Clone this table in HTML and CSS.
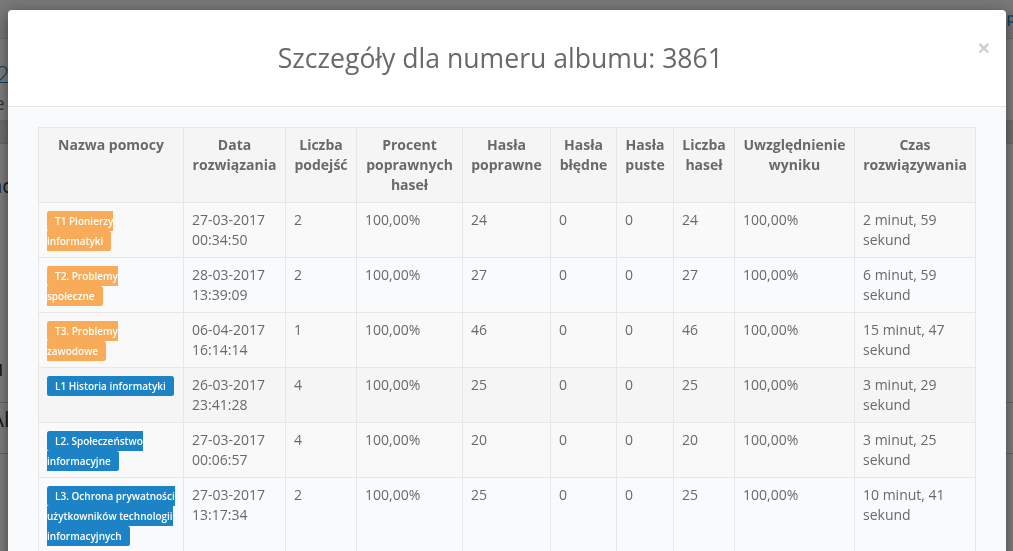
FILE: index.html
```html
<!DOCTYPE html>
<html lang="pl">
<head>
    <meta charset="UTF-8">
    <meta name="viewport" content="width=device-width, initial-scale=1.0">
    <title>Szczegóły albumu</title>
    <link rel="stylesheet" href="styles.css">
</head>
<body>

<!-- Page behind the modal -->
<div class="page">
    <div class="page-top"><span class="page-user">pl</span></div>
    <div class="page-head">
        <h2>2</h2>
        <p>je</p>
    </div>
    <div class="page-bar"></div>
    <div class="page-content">
        <p class="page-big">nc</p>
        <p class="page-row">u</p>
        <p class="page-row page-line">Al</p>
        <p class="page-row page-line"></p>
    </div>
</div>

<div class="backdrop"></div>

<!-- Modal -->
<div class="modal">
    <div class="modal-dialog">
        <div class="modal-content">
            <div class="modal-header">
                <button type="button" class="close">&times;</button>
                <h4 class="modal-title">Szczegóły dla numeru albumu: 3861</h4>
            </div>
            <div class="modal-body">
                <table class="table">
                    <colgroup>
                        <col style="width: 145px">
                        <col style="width: 102px">
                        <col style="width: 71px">
                        <col style="width: 106px">
                        <col style="width: 88px">
                        <col style="width: 66px">
                        <col style="width: 57px">
                        <col style="width: 61px">
                        <col style="width: 120px">
                        <col style="width: 121px">
                    </colgroup>
                    <thead>
                    <tr>
                        <th>Nazwa pomocy</th>
                        <th>Data rozwiązania</th>
                        <th>Liczba podejść</th>
                        <th>Procent poprawnych haseł</th>
                        <th>Hasła poprawne</th>
                        <th>Hasła błędne</th>
                        <th>Hasła puste</th>
                        <th>Liczba haseł</th>
                        <th>Uwzględnienie wyniku</th>
                        <th>Czas rozwiązywania</th>
                    </tr>
                    </thead>
                    <tbody>
                    <tr>
                        <td><span class="label label-warning">T1 Pionierzy informatyki</span></td>
                        <td>27-03-2017 00:34:50</td>
                        <td>2</td>
                        <td>100,00%</td>
                        <td>24</td>
                        <td>0</td>
                        <td>0</td>
                        <td>24</td>
                        <td>100,00%</td>
                        <td>2 minut, 59 sekund</td>
                    </tr>
                    <tr>
                        <td><span class="label label-warning">T2. Problemy społeczne</span></td>
                        <td>28-03-2017 13:39:09</td>
                        <td>2</td>
                        <td>100,00%</td>
                        <td>27</td>
                        <td>0</td>
                        <td>0</td>
                        <td>27</td>
                        <td>100,00%</td>
                        <td>6 minut, 59 sekund</td>
                    </tr>
                    <tr>
                        <td><span class="label label-warning">T3. Problemy zawodowe</span></td>
                        <td>06-04-2017 16:14:14</td>
                        <td>1</td>
                        <td>100,00%</td>
                        <td>46</td>
                        <td>0</td>
                        <td>0</td>
                        <td>46</td>
                        <td>100,00%</td>
                        <td>15 minut, 47 sekund</td>
                    </tr>
                    <tr class="hover">
                        <td><span class="label label-success">L1 Historia informatyki</span></td>
                        <td>26-03-2017 23:41:28</td>
                        <td>4</td>
                        <td>100,00%</td>
                        <td>25</td>
                        <td>0</td>
                        <td>0</td>
                        <td>25</td>
                        <td>100,00%</td>
                        <td>3 minut, 29 sekund</td>
                    </tr>
                    <tr>
                        <td><span class="label label-success">L2. Społeczeństwo informacyjne</span></td>
                        <td>27-03-2017 00:06:57</td>
                        <td>4</td>
                        <td>100,00%</td>
                        <td>20</td>
                        <td>0</td>
                        <td>0</td>
                        <td>20</td>
                        <td>100,00%</td>
                        <td>3 minut, 25 sekund</td>
                    </tr>
                    <tr>
                        <td><span class="label label-success">L3. Ochrona prywatności użytkowników technologii informacyjnych</span></td>
                        <td>27-03-2017 13:17:34</td>
                        <td>2</td>
                        <td>100,00%</td>
                        <td>25</td>
                        <td>0</td>
                        <td>0</td>
                        <td>25</td>
                        <td>100,00%</td>
                        <td>10 minut, 41 sekund</td>
                    </tr>
                    </tbody>
                </table>
            </div>
        </div>
    </div>
</div>

</body>
</html>
```

FILE: styles.css
```css
/* Base */
html, body {
    margin: 0;
    height: 100%;
    overflow: hidden;
}

body {
    font-family: "Open Sans", "Liberation Sans", sans-serif;
    font-size: 14px;
    line-height: 1.42857;
    color: #676a6c;
    background-color: #f3f3f4;
}

/* Page behind the backdrop */
.page-top {
    height: 38px;
    border-bottom: 1px solid #d8d8d8;
    background-color: #eeeeee;
    text-align: right;
}

.page-user {
    display: inline-block;
    margin-right: -6px;
    padding-top: 8px;
    color: #1c84c6;
    font-weight: 600;
}

.page-head {
    height: 81px;
    background-color: #ffffff;
    border-bottom: 1px solid #d8d8d8;
}

.page-head h2 {
    margin: 0;
    padding-top: 18px;
    font-size: 24px;
    font-weight: 300;
    line-height: 34px;
    color: #1c84c6;
    text-indent: -4px;
}

.page-head p {
    margin: 0;
    font-size: 18px;
    text-indent: -10px;
}

.page-bar {
    height: 22px;
    background-color: #e0e0e0;
    border-bottom: 1px solid #d4d4d4;
}

.page-content {
    background-color: #ffffff;
    height: 420px;
}

.page-content p {
    margin: 0;
    text-indent: -10px;
    color: #333333;
}

.page-big {
    padding-top: 28px;
    height: 180px;
    font-size: 20px;
}

.page-row {
    height: 50px;
    font-size: 22px;
}

.page-line {
    border-top: 1px solid #cccccc;
}

.backdrop {
    position: fixed;
    inset: 0;
    background-color: rgba(0, 0, 0, 0.5);
}

/* Modal */
.modal {
    position: fixed;
    inset: 0;
}

.modal-dialog {
    width: 998px;
    margin: 10px 0 0 8px;
}

.modal-content {
    background-color: #ffffff;
    border-radius: 4px;
    box-shadow: 0 5px 15px rgba(0, 0, 0, 0.5);
    overflow: hidden;
}

.modal-header {
    padding: 30px 15px;
    text-align: center;
    border-bottom: 1px solid #e5e5e5;
}

.modal-title {
    margin: 0;
    padding-top: 1px;
    font-size: 26.6px;
    font-weight: 400;
    line-height: 35px;
    color: #676a6c;
}

.close {
    float: right;
    margin-top: -3px;
    margin-right: 1px;
    padding: 0;
    border: 0;
    background: transparent;
    font-family: "Liberation Sans", sans-serif;
    font-size: 21px;
    font-weight: bold;
    line-height: 1;
    color: #000000;
    opacity: 0.2;
}

.modal-body {
    padding: 20px 30px;
    background-color: #f8fafb;
    height: 480px;
}

/* Table */
.table {
    width: 100%;
    table-layout: fixed;
    border-collapse: collapse;
    border: 1px solid #e7e7e7;
}

.table th,
.table td {
    padding: 7px 8px;
    border: 1px solid #e7e7e7;
    vertical-align: top;
    line-height: 20px;
}

.table th {
    background-color: #f5f5f5;
    font-weight: bold;
    text-align: center;
}

.table tbody tr:nth-of-type(odd) {
    background-color: #f9f9f9;
}

.table tbody tr.hover {
    background-color: #f5f5f5;
}

/* Labels */
.label {
    display: inline;
    padding: 3px 8px;
    font-size: 10px;
    font-weight: 600;
    line-height: 1;
    color: #ffffff;
    border-radius: 0.25em;
}

.label-warning {
    background-color: #f8ac59;
}

.label-success {
    background-color: #1c84c6;
}
```
